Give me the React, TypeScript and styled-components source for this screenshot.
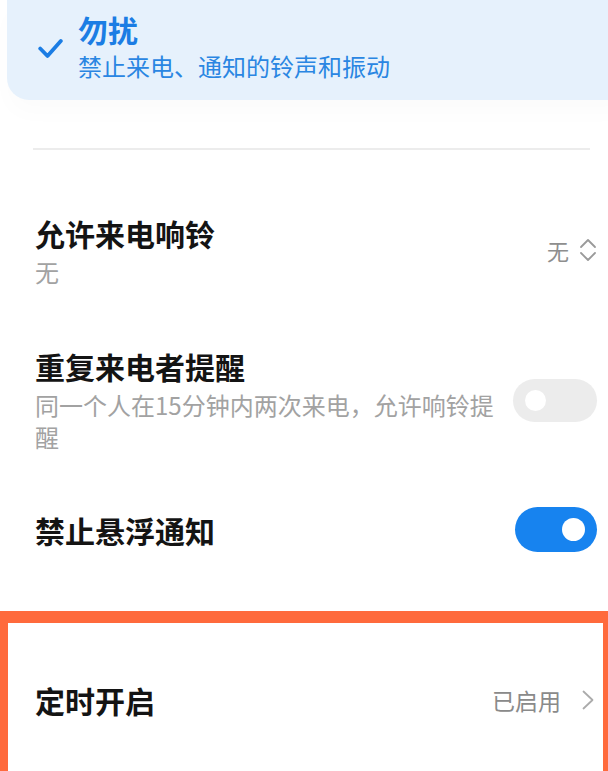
import React from "react";
import styled, { createGlobalStyle } from "styled-components";

const Global = createGlobalStyle`
  html, body { margin: 0; padding: 0; background: #ffffff; overflow: hidden; }
  body { font-family: "Noto Sans CJK SC", "Noto Sans", sans-serif; }
  #root { width: 608px; height: 771px; overflow: hidden; }
`;

const Page = styled.div`
  width: 608px;
  height: 771px;
  display: flex;
  flex-direction: column;
  background: #fff;
`;

const ModeCard = styled.div`
  margin-left: 7px;
  margin-right: -30px;
  height: 100px;
  box-sizing: border-box;
  padding: 11px 0 0 31px;
  background: #e6f1fc;
  border-radius: 0 0 22px 22px;
  display: flex;
  align-items: flex-start;
  gap: 15px;
  box-shadow: 0 14px 22px rgba(0, 0, 0, 0.015);
`;

const CheckWrap = styled.div`
  width: 25px;
  height: 21px;
  margin-top: 27px;
  display: flex;
`;

const ModeText = styled.div`
  display: flex;
  flex-direction: column;
  gap: 4px;
`;

const ModeTitle = styled.div`
  font-size: 30px;
  line-height: 36px;
  font-weight: 700;
  color: #1b7de4;
`;

const ModeSub = styled.div`
  font-size: 24px;
  line-height: 30px;
  color: #2a86e2;
`;

const Divider = styled.div`
  height: 2px;
  background: #ececec;
  margin: 48px 18px 0 33px;
`;

const Row = styled.div<{ $top: number }>`
  display: flex;
  align-items: center;
  justify-content: space-between;
  gap: 8px;
  padding: 0 11px 0 35px;
  margin-top: ${(p) => p.$top}px;
`;

const TextCol = styled.div`
  display: flex;
  flex-direction: column;
  gap: 4px;
  max-width: 470px;
`;

const Title = styled.div`
  font-size: 30px;
  line-height: 38px;
  font-weight: 700;
  color: #141414;
`;

const Sub = styled.div`
  font-size: 24px;
  line-height: 32px;
  color: #a2a2a2;
`;

const Value = styled.div`
  display: flex;
  align-items: center;
  gap: 10px;
  font-size: 22px;
  color: #8e8e8e;
  margin-top: -2px;
`;

const Toggle = styled.div<{ $on: boolean }>`
  width: ${(p) => (p.$on ? 82 : 84)}px;
  height: ${(p) => (p.$on ? 45 : 43)}px;
  border-radius: 24px;
  background: ${(p) => (p.$on ? "#1783ef" : "#ececec")};
  display: flex;
  align-items: center;
  justify-content: ${(p) => (p.$on ? "flex-end" : "flex-start")};
  padding: 0 12px;
  box-sizing: border-box;
  flex-shrink: 0;
`;

const Knob = styled.div<{ $on: boolean }>`
  width: ${(p) => (p.$on ? 23 : 21)}px;
  height: ${(p) => (p.$on ? 23 : 21)}px;
  border-radius: 50%;
  background: #fff;
`;

const Highlight = styled.div`
  margin-top: 59px;
  flex: 1;
  border-top: 12px solid #ff6a3c;
  border-left: 8px solid #ff6a3c;
  border-right: 5px solid #ff6a3c;
  padding: 58px 8px 0 27px;
`;

const LinkRow = styled.div`
  display: flex;
  align-items: center;
  justify-content: space-between;
`;

const LinkValue = styled.div`
  display: flex;
  align-items: center;
  gap: 20px;
  font-size: 23px;
  color: #8a8a8a;
`;

const Check = () => (
  <svg width="25" height="21" viewBox="0 0 25 21">
    <path d="M2.2 10.5 L9.5 18 L22.8 3" fill="none" stroke="#1b7de4" strokeWidth="3.8" strokeLinecap="round" strokeLinejoin="round" />
  </svg>
);

const UpDown = () => (
  <svg width="18" height="24" viewBox="0 0 18 24">
    <path d="M2 9 L9 2 L16 9" fill="none" stroke="#9a9a9a" strokeWidth="1.8" strokeLinecap="round" strokeLinejoin="round" />
    <path d="M2 15 L9 22 L16 15" fill="none" stroke="#9a9a9a" strokeWidth="1.8" strokeLinecap="round" strokeLinejoin="round" />
  </svg>
);

const Chevron = () => (
  <svg width="14" height="20" viewBox="0 0 14 20">
    <path d="M2.5 1.5 L11.5 10 L2.5 18.5" fill="none" stroke="#ababab" strokeWidth="1.8" strokeLinecap="round" strokeLinejoin="round" />
  </svg>
);

export default function App() {
  return (
    <Page>
      <Global />
      <ModeCard>
        <CheckWrap>
          <Check />
        </CheckWrap>
        <ModeText>
          <ModeTitle>勿扰</ModeTitle>
          <ModeSub>禁止来电、通知的铃声和振动</ModeSub>
        </ModeText>
      </ModeCard>
      <Divider />
      <Row $top={64}>
        <TextCol>
          <Title>允许来电响铃</Title>
          <Sub>无</Sub>
        </TextCol>
        <Value>
          无
          <UpDown />
        </Value>
      </Row>
      <Row $top={59}>
        <TextCol>
          <Title>重复来电者提醒</Title>
          <Sub>同一个人在15分钟内两次来电，允许响铃提醒</Sub>
        </TextCol>
        <Toggle $on={false}>
          <Knob $on={false} />
        </Toggle>
      </Row>
      <Row $top={54}>
        <TextCol>
          <Title>禁止悬浮通知</Title>
        </TextCol>
        <Toggle $on={true}>
          <Knob $on={true} />
        </Toggle>
      </Row>
      <Highlight>
        <LinkRow>
          <Title>定时开启</Title>
          <LinkValue>
            已启用
            <Chevron />
          </LinkValue>
        </LinkRow>
      </Highlight>
    </Page>
  );
}
